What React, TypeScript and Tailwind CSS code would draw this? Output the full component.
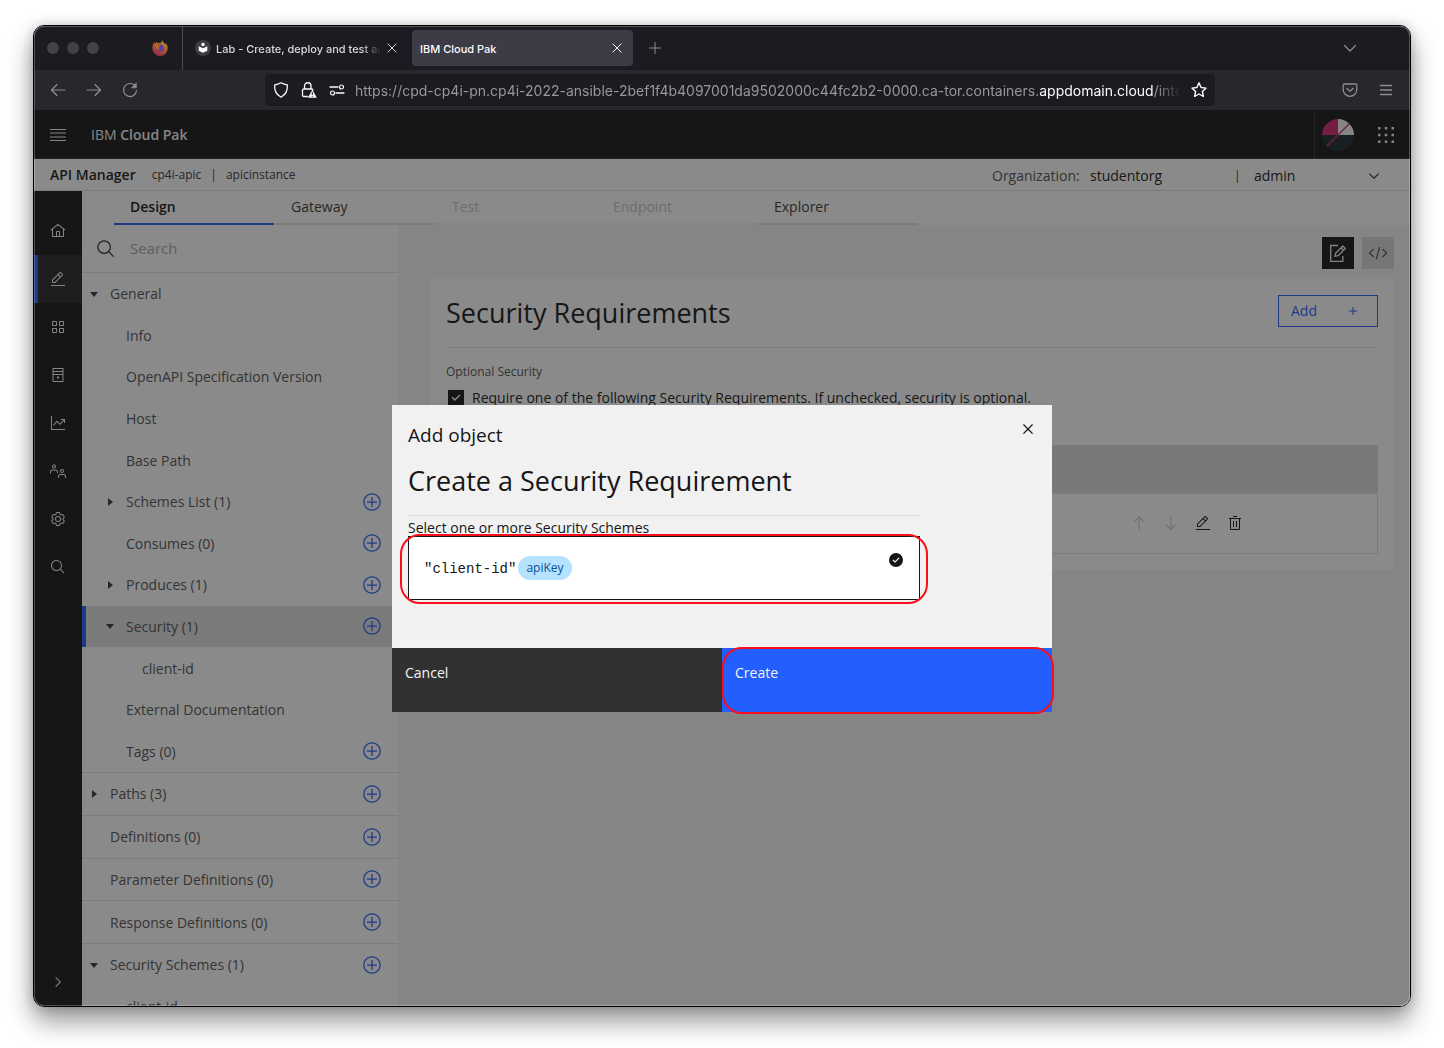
import React from 'react';

const BODY = "font-['Open_Sans',sans-serif]";

function Carbon({ d, className = 'size-4' }: { d: string; className?: string }) {
  return (
    <svg viewBox="0 0 32 32" fill="currentColor" className={`${className} shrink-0`} aria-hidden="true">
      <path d={d} />
    </svg>
  );
}

const ICON = {
  home: 'M16.6123,2.2138a1.01,1.01,0,0,0-1.2427,0L1,13.4194l1.2427,1.5717L4,13.6208V26a2.0041,2.0041,0,0,0,2,2H26a2.0037,2.0037,0,0,0,2-2V13.63L29.7573,15,31,13.4282ZM18,26H14V18h4Zm2,0V18a2.0023,2.0023,0,0,0-2-2H14a2.002,2.002,0,0,0-2,2v8H6V12.0615l10-7.79,10,7.8005V26Z',
  edit: 'M2,28H30V30H2zM25.4,9c0.8-0.8,0.8-2,0-2.8l-3.6-3.6c-0.8-0.8-2-0.8-2.8,0l-15,15V24h6.4L25.4,9zM20.4,4L24,7.6l-3,3L17.4,7L20.4,4zM6,22v-3.6l10-10l3.6,3.6l-10,10H6z',
  grid: 'M12,4H6A2,2,0,0,0,4,6v6a2,2,0,0,0,2,2h6a2,2,0,0,0,2-2V6A2,2,0,0,0,12,4Zm0,8H6V6h6ZM26,4H20a2,2,0,0,0-2,2v6a2,2,0,0,0,2,2h6a2,2,0,0,0,2-2V6A2,2,0,0,0,26,4Zm0,8H20V6h6ZM12,18H6a2,2,0,0,0-2,2v6a2,2,0,0,0,2,2h6a2,2,0,0,0,2-2V20A2,2,0,0,0,12,18Zm0,8H6V20h6ZM26,18H20a2,2,0,0,0-2,2v6a2,2,0,0,0,2,2h6a2,2,0,0,0,2-2V20A2,2,0,0,0,26,18Zm0,8H20V20h6Z',
  server: 'M5,2H27V30H5ZM7,4V8H25V4ZM7,10V14H25V10ZM7,16V28H25V16ZM14,19H18V23H14Z',
  chart: 'M2,2H4V28H30V30H2ZM22,8H30V16H28V11.4L20,20L14,14L7.4,21.4L6,20L14,11L20,17L26.6,10H22Z',
  users: 'M8,3a4,4,0,1,1,0,8a4,4,0,0,1,0-8zM8,5a2,2,0,1,0,0,4a2,2,0,0,0,0-4zM0,21V18a5,5,0,0,1,5-5H11a5,5,0,0,1,5,5V20H14V18a3,3,0,0,0-3-3H5a3,3,0,0,0-3,3V21zM24,12a4,4,0,1,1,0,8a4,4,0,0,1,0-8zM24,14a2,2,0,1,0,0,4a2,2,0,0,0,0-4zM16,30V27a5,5,0,0,1,5-5H27a5,5,0,0,1,5,5V30H30V27a3,3,0,0,0-3-3H21a3,3,0,0,0-3,3V30z',
  gear: 'M27,16.76c0-.25,0-.5,0-.76s0-.51,0-.77l1.92-1.68A2,2,0,0,0,29.3,11L26.94,7a2,2,0,0,0-1.73-1,2,2,0,0,0-.64.1l-2.43.82a11.35,11.35,0,0,0-1.31-.75l-.51-2.52a2,2,0,0,0-2-1.61H13.64a2,2,0,0,0-2,1.61l-.51,2.52a11.48,11.48,0,0,0-1.32.75L7.43,6.06A2,2,0,0,0,6.79,6,2,2,0,0,0,5.06,7L2.7,11a2,2,0,0,0,.41,2.51L5,15.24c0,.25,0,.5,0,.76s0,.51,0,.77L3.11,18.45A2,2,0,0,0,2.7,21L5.06,25a2,2,0,0,0,1.73,1,2,2,0,0,0,.64-.1l2.43-.82a11.35,11.35,0,0,0,1.31.75l.51,2.52a2,2,0,0,0,2,1.61h4.72a2,2,0,0,0,2-1.61l.51-2.52a11.48,11.48,0,0,0,1.32-.75l2.42.82a2,2,0,0,0,.64.1,2,2,0,0,0,1.73-1L29.3,21a2,2,0,0,0-.41-2.51ZM25.21,24l-3.43-1.16a8.86,8.86,0,0,1-2.71,1.57L18.36,28H13.64l-.71-3.55a9.36,9.36,0,0,1-2.7-1.57L6.79,24,4.43,20l2.72-2.4a8.9,8.9,0,0,1,0-3.13L4.43,12,6.79,8l3.43,1.16a8.86,8.86,0,0,1,2.71-1.57L13.64,4h4.72l.71,3.55a9.36,9.36,0,0,1,2.7,1.57L25.21,8,27.57,12l-2.72,2.4a8.9,8.9,0,0,1,0,3.13L27.57,20ZM16,22a6,6,0,1,1,6-6A5.94,5.94,0,0,1,16,22Zm0-10a3.91,3.91,0,0,0-4,4,3.91,3.91,0,0,0,4,4,3.91,3.91,0,0,0,4-4A3.91,3.91,0,0,0,16,12Z',
  search: 'M29,27.5859l-7.5521-7.5521a11.0177,11.0177,0,1,0-1.4141,1.4141L27.5859,29ZM4,13a9,9,0,1,1,9,9A9.01,9.01,0,0,1,4,13Z',
  addAlt: 'M16,4c6.6,0,12,5.4,12,12s-5.4,12-12,12S4,22.6,4,16S9.4,4,16,4M16,2C8.3,2,2,8.3,2,16s6.3,14,14,14s14-6.3,14-14S23.7,2,16,2zM24,15L17,15 17,8 15,8 15,15 8,15 8,17 15,17 15,24 17,24 17,17 24,17z',
  add: 'M17,15V8H15V15H8V17H15V24H17V17H24V15Z',
  code: 'M31,16L24,23 22.59,21.59 28.17,16 22.59,10.41 24,9zM1,16L8,9 9.41,10.41 3.83,16 9.41,21.59 8,23zM12.42,25.484L17.64,6 19.572,6.517 14.352,26.002z',
  close: 'M24,9.4L22.6,8 16,14.6 9.4,8 8,9.4 14.6,16 8,22.6 9.4,24 16,17.4 22.6,24 24,22.6 17.4,16z',
  trash: 'M12,12H14V24H12zM18,12H20V24H18zM4,6V8H6V28a2,2,0,0,0,2,2H24a2,2,0,0,0,2-2V8h2V6ZM8,28V8H24V28ZM12,2H20V4H12z',
  up: 'M16,2L26,12 24.6,13.4 17,5.8V30H15V5.8L7.4,13.4 6,12z',
  down: 'M16,30L6,20 7.4,18.6 15,26.2V2H17V26.2L24.6,18.6 26,20z',
  chevronDown: 'M16,22L6,12 7.4,10.6 16,19.2 24.6,10.6 26,12z',
  chevronRight: 'M22,16L12,26 10.6,24.6 19.2,16 10.6,7.4 12,6z',
  caretDown: 'M24,12L16,22 8,12z',
  caretRight: 'M12,8L22,16 12,24z',
  checkFilled: 'M16,2a14,14,0,1,0,14,14A14,14,0,0,0,16,2zM14,21.5908l-5-5L10.5906,15,14,18.4092,21.41,11l1.5957,1.5859z',
  check: 'M13,24L4,15 6.6,12.4 13,18.8 25.4,6.4 28,9z',
  menu: 'M0,4H32V6H0zM0,11H32V13H0zM0,19H32V21H0zM0,26H32V28H0z',
  dots: 'M0,0H5V5H0zM13.500,0H18.500V5H13.500zM27,0H32V5H27zM0,13.500H5V18.500H0zM13.500,13.500H18.500V18.500H13.500zM27,13.500H32V18.500H27zM0,27H5V32H0zM13.500,27H18.500V32H13.500zM27,27H32V32H27z',
};

function Stroke({ children, className = 'size-4' }: { children: React.ReactNode; className?: string }) {
  return (
    <svg viewBox="0 0 16 16" fill="none" stroke="currentColor" strokeLinecap="round" strokeLinejoin="round" className={`${className} shrink-0`} aria-hidden="true">
      {children}
    </svg>
  );
}

function FirefoxLogo() {
  return (
    <svg viewBox="0 0 16 16" className="size-4" aria-label="Firefox">
      <defs>
        <linearGradient id="flame" x1="0.8" y1="0" x2="0.3" y2="1">
          <stop offset="0" stopColor="#b39a35" />
          <stop offset="0.45" stopColor="#b05d2d" />
          <stop offset="1" stopColor="#97264c" />
        </linearGradient>
      </defs>
      <path fill="url(#flame)" d="M10.2.2c-.8.8-.9 2-.6 2.6C8.400 2.600 7 2.800 6 3.300 5.200 3 4.700 2.400 4.600 1.800 4 2.300 3.800 3 3.800 3.600 3 3.300 2.400 2.500 2.300 1.900 1.200 3.200.3 5.600.3 8.200a7.700 7.700 0 0 0 15.400 0c0-2.100-.7-3.700-1.700-4.700.1.5.1.900 0 1.300C13.200 3 10.700 2.500 10.200.2z" />
      <circle cx="8.300" cy="8" r="3.500" fill="#5a3f9c" />
      <path fill="#b5652c" d="M3.500 5.400c1.200-.8 2.300-.6 3.200 0l2 .3c0 .8-1.300 1.100-1.800 1.500.1 1 .9 1.700 2 1.600-1 1.200-3.500 1.100-4.500-.6-.5-.900-.9-1.900-.9-2.800z" />
    </svg>
  );
}

function BrowserChrome() {
  return (
    <div className="shrink-0 font-['Inter',sans-serif]">
      <div className="flex h-11 items-center bg-[#1c1b22]">
        <div className="flex h-full w-[149px] shrink-0 items-center border-r border-[#4a4950] pl-[13px]">
          <div className="flex flex-1 gap-2">
            <span className="size-3 rounded-full bg-[#424147]" />
            <span className="size-3 rounded-full bg-[#424147]" />
            <span className="size-3 rounded-full bg-[#424147]" />
          </div>
          <div className="pr-[14px]"><FirefoxLogo /></div>
        </div>
        <div className="flex h-9 w-[229px] shrink-0 items-center gap-[5px] pl-3 pr-[14px] text-[#d8d8dc]">
          <svg viewBox="0 0 16 16" className="size-4 shrink-0" aria-hidden="true">
            <circle cx="8" cy="8" r="8" fill="#3d3d3f" />
            <circle cx="8" cy="4.500" r="1.700" fill="#fff" />
            <path fill="#fff" d="M3.700 6.200 8 8.200l4.300-2v4.600L8 12.800l-4.300-2z" />
          </svg>
          <span className="flex-1 overflow-hidden whitespace-nowrap pt-0.5 text-[11px] font-medium [mask-image:linear-gradient(to_right,black_88%,transparent)]">Lab - Create, deploy and test an</span>
          <button type="button" aria-label="Close tab"><Stroke className="size-3"><path strokeWidth="1.300" d="M2.500 2.500l11 11M13.500 2.500l-11 11" /></Stroke></button>
        </div>
        <div className="flex h-9 w-[221px] shrink-0 items-center justify-between rounded bg-[#3d3b46] pl-2 pr-[10px] text-[#fbfbfe]">
          <span className="pt-0.5 text-[11px] font-medium">IBM Cloud Pak</span>
          <button type="button" aria-label="Close tab"><Stroke className="size-3"><path strokeWidth="1.300" d="M2.500 2.500l11 11M13.500 2.500l-11 11" /></Stroke></button>
        </div>
        <button type="button" aria-label="New tab" className="ml-[14px] text-[#8d8d92]"><Stroke><path d="M8 2.500v11M2.500 8h11" /></Stroke></button>
        <button type="button" aria-label="List all tabs" className="ml-auto mr-[52px] text-[#8d8d92]"><Stroke><path strokeWidth="1.200" d="M2.500 5.500 8 11l5.500-5.500" /></Stroke></button>
      </div>
      <div className="flex h-[41px] items-center border-b border-[#141418] bg-[#27282e] text-[#8d8d92]">
        <div className="flex w-[231px] shrink-0 gap-5 pl-4">
          <button type="button" aria-label="Back"><Stroke><path strokeWidth="1.200" d="M15 8H1.500M7 2.500 1.500 8 7 13.500" /></Stroke></button>
          <button type="button" aria-label="Forward"><Stroke><path strokeWidth="1.200" d="M1 8h13.500M9 2.500 14.500 8 9 13.500" /></Stroke></button>
          <button type="button" aria-label="Reload"><Stroke><path strokeWidth="1.200" d="M14.500 8.500A6.500 6.500 0 1 1 12.800 3.600" /><path fill="currentColor" strokeWidth="0.800" d="M14.300 1.300v4.500H9.800z" /></Stroke></button>
        </div>
        <div className="flex h-8 min-w-0 flex-1 items-center gap-3 rounded bg-[#1c1b22] px-2 text-[#fbfbfe]">
          <Stroke><path strokeWidth="1.300" d="M8 .8c2 1.100 4 1.800 6.300 2 .5 6-1.800 10-6.300 12.400C3.500 12.800 1.200 8.800 1.700 2.800 4 2.600 6 1.900 8 .8z" /></Stroke>
          <Stroke>
            <path strokeWidth="1.300" d="M3.500 7V4a3 3 0 0 1 6.500 0v3M6.500 14.500H2.700a1.200 1.200 0 0 1-1.200-1.200V8.200A1.200 1.200 0 0 1 2.700 7h8a1.200 1.200 0 0 1 1.200 1" />
            <path fill="currentColor" stroke="none" d="M11.300 7.800 15.800 15.700H6.900z" />
            <path stroke="#1c1b22" strokeWidth="1.100" d="M11.300 10.600v1.900M11.300 14.200v.1" />
          </Stroke>
          <Stroke><path strokeWidth="1.300" d="M1 5h8M7 11h8" /><circle cx="12.500" cy="5" r="2" strokeWidth="1.200" /><circle cx="3.500" cy="11" r="2" strokeWidth="1.200" /></Stroke>
          <p className="-mx-0.5 min-w-0 flex-1 overflow-hidden whitespace-nowrap pt-px text-sm text-[#97979c] [mask-image:linear-gradient(to_right,black_97%,transparent)]">
            https://cpd-cp4i-pn.cp4i-2022-ansible-2bef1f4b4097001da9502000c44fc2b2-0000.ca-tor.containers.<span className="text-[#fbfbfe]">appdomain.cloud</span>/integra
          </p>
          <button type="button" aria-label="Bookmark this page"><Stroke><path strokeWidth="1.400" d="M8 .9l2.100 4.600 5 .6-3.700 3.400 1 5L8 12l-4.400 2.500 1-5L.9 6.100l5-.6z" /></Stroke></button>
        </div>
        <div className="flex w-[195px] shrink-0 justify-end gap-5 pr-4">
          <button type="button" aria-label="Save to Pocket"><Stroke><path strokeWidth="1.300" d="M2.500 2h11c.8 0 1.300.5 1.300 1.300V7.500a6.800 6.800 0 0 1-13.600 0V3.300C1.200 2.500 1.700 2 2.500 2zM4.800 6.200 8 9.200l3.200-3" /></Stroke></button>
          <button type="button" aria-label="Application menu"><Stroke><path strokeWidth="1.300" d="M2.500 3.500h11M2.500 8h11M2.500 12.500h11" /></Stroke></button>
        </div>
      </div>
    </div>
  );
}

function ProductHeader() {
  return (
    <header className="flex h-12 shrink-0 items-center border-b border-[#393939] bg-[#161616] text-[#f4f4f4]">
      <button type="button" aria-label="Open menu" className="ml-4"><Carbon d={ICON.menu} /></button>
      <span className="ml-[25px] text-sm">IBM <span className="font-semibold">Cloud Pak</span></span>
      <div className="ml-auto flex h-full items-center gap-6 border-l border-[#393939] pl-[7px] pr-4">
        <svg viewBox="0 0 32 32" className="size-8" aria-label="User profile">
          <path fill="#d12771" d="M16 16V0A16 16 0 0 0 0 16z" />
          <path fill="#f4f4f4" d="M16 16V0a16 16 0 0 1 16 16z" />
          <path fill="#1c2b33" d="M0 16a16 16 0 0 0 32 0z" />
          <path stroke="#d12771" strokeWidth="1.300" d="M5 27 27.500 4.500" />
        </svg>
        <button type="button" aria-label="App switcher"><Carbon d={ICON.dots} /></button>
      </div>
    </header>
  );
}

function ContextBar() {
  return (
    <div className="flex h-8 shrink-0 items-center border-b border-[#e0e0e0] bg-white pl-4 text-[#161616]">
      <strong className="text-sm font-semibold">API Manager</strong>
      <span className="ml-4 text-xs text-[#393939]">cp4i-apic</span>
      <span className="ml-[9px] text-xs text-[#393939]">|</span>
      <span className="ml-[9px] text-xs text-[#393939]">apicinstance</span>
      <div className="ml-auto flex items-center pt-0.5 text-sm">
        <span className="w-[98px] text-[#525252]">Organization:</span>
        <span className="w-36">studentorg</span>
        <span className="w-5 text-xs text-[#393939]">|</span>
        <button type="button" className="flex w-[156px] items-center justify-between pr-7">
          admin <Carbon d={ICON.chevronDown} />
        </button>
      </div>
    </div>
  );
}

const NAV = [
  { label: 'Home', d: ICON.home },
  { label: 'Develop', d: ICON.edit, active: true },
  { label: 'Manage', d: ICON.grid },
  { label: 'Resources', d: ICON.server },
  { label: 'Analytics', d: ICON.chart },
  { label: 'Members', d: ICON.users },
  { label: 'Settings', d: ICON.gear },
  { label: 'Search', d: ICON.search },
];

function SideNav() {
  return (
    <nav className="flex w-12 shrink-0 flex-col bg-[#161616] pt-4 text-[#f4f4f4]">
      {NAV.map((n) => (
        <button key={n.label} type="button" aria-label={n.label} className={n.active ? 'flex h-12 items-center justify-center border-l-4 border-[#225ffe] bg-[#262626] pr-1' : 'flex h-12 items-center justify-center'}>
          <Carbon d={n.d} />
        </button>
      ))}
      <button type="button" aria-label="Expand" className="mt-auto flex h-12 items-center justify-center"><Carbon d={ICON.chevronRight} /></button>
    </nav>
  );
}

const TABS = [
  { label: 'Design', look: 'border-[#225ffe] font-semibold text-[#161616]' },
  { label: 'Gateway', look: 'border-[#e0e0e0] text-[#393939]' },
  { label: 'Test', look: 'border-[#f4f4f4] text-[#c6c6c6]', disabled: true },
  { label: 'Endpoint', look: 'border-[#f4f4f4] text-[#c6c6c6]', disabled: true },
  { label: 'Explorer', look: 'border-[#e0e0e0] text-[#393939]' },
];

function Tabs() {
  return (
    <div role="tablist" className="flex h-[34px] shrink-0 gap-px bg-white pl-8">
      {TABS.map((t) => (
        <button key={t.label} role="tab" type="button" disabled={t.disabled} className={`w-40 border-b-2 px-4 text-left text-sm ${t.look}`}>{t.label}</button>
      ))}
    </div>
  );
}

type Row = { label: string; level: 0 | 1 | 2; caret?: 'down' | 'right'; add?: boolean; active?: boolean };

const GENERAL: Row[] = [
  { label: 'General', level: 0, caret: 'down' },
  { label: 'Info', level: 1 },
  { label: 'OpenAPI Specification Version', level: 1 },
  { label: 'Host', level: 1 },
  { label: 'Base Path', level: 1 },
  { label: 'Schemes List (1)', level: 1, caret: 'right', add: true },
  { label: 'Consumes (0)', level: 1, add: true },
  { label: 'Produces (1)', level: 1, caret: 'right', add: true },
  { label: 'Security (1)', level: 1, caret: 'down', add: true, active: true },
  { label: 'client-id', level: 2 },
  { label: 'External Documentation', level: 1 },
  { label: 'Tags (0)', level: 1, add: true },
];

const SECTIONS: Row[] = [
  { label: 'Paths (3)', level: 0, caret: 'right', add: true },
  { label: 'Definitions (0)', level: 0, add: true },
  { label: 'Parameter Definitions (0)', level: 0, add: true },
  { label: 'Response Definitions (0)', level: 0, add: true },
];

const SCHEMES: Row[] = [
  { label: 'Security Schemes (1)', level: 0, caret: 'down', add: true },
  { label: 'client-id', level: 1 },
];

const INDENT = ['pl-1', 'pl-5', 'pl-9'];

function TreeRow({ row }: { row: Row }) {
  return (
    <div className={row.active ? 'flex h-full items-center border-l-4 border-[#225ffe] bg-[#e0e0e0] pr-4' : 'flex h-full items-center pl-1 pr-4'}>
      <button type="button" className={`flex flex-1 items-center gap-2 text-left ${INDENT[row.level]}`}>
        <span className="-ml-1 w-4 text-[#393939]">
          {row.caret && <Carbon d={row.caret === 'down' ? ICON.caretDown : ICON.caretRight} />}
        </span>
        <span className="pt-px">{row.label}</span>
      </button>
      {row.add && <button type="button" aria-label={`Add ${row.label}`} className="text-[#225ffe]"><Carbon d={ICON.addAlt} className="size-5" /></button>}
    </div>
  );
}

function Tree() {
  return (
    <aside className="flex w-[316px] shrink-0 flex-col overflow-hidden bg-white text-sm text-[#525252]">
      <label className="flex h-12 shrink-0 items-center gap-[14px] border-b border-[#e0e0e0] pl-[14px] pt-px text-[#393939]">
        <Carbon d={ICON.search} className="size-5" />
        <input type="search" placeholder="Search" aria-label="Search" className="w-full bg-transparent text-[15px] outline-none placeholder:text-[#a8a8a8]" />
      </label>
      <div className="grid h-[499px] shrink-0 auto-rows-fr">
        {GENERAL.map((r) => <TreeRow key={r.label} row={r} />)}
      </div>
      <div className="grid h-[171px] shrink-0 auto-rows-fr">
        {SECTIONS.map((r) => <div key={r.label} className="border-t border-[#e0e0e0]"><TreeRow row={r} /></div>)}
      </div>
      <div className="grid h-[84px] shrink-0 auto-rows-fr border-t border-[#e0e0e0]">
        {SCHEMES.map((r) => <TreeRow key={r.label} row={r} />)}
      </div>
    </aside>
  );
}

function Editor() {
  return (
    <main className="min-w-0 flex-1 overflow-hidden bg-[#f4f4f4] pl-8 pr-4 pt-3 text-[#161616]">
      <div className="flex justify-end gap-2">
        <button type="button" aria-label="Form view" className="flex size-8 items-center justify-center bg-[#161616] text-[#f4f4f4]">
          <svg viewBox="0 0 20 20" fill="none" stroke="currentColor" strokeWidth="1.300" className="size-5" aria-hidden="true">
            <path d="M10 2.500H2.700v15.800h12.100V13" />
            <path d="M7 13.200l.6-3L14.800 3l2.500 2.500-7.200 7.200zM13 4.800l2.500 2.500" />
          </svg>
        </button>
        <button type="button" aria-label="Source view" className="flex size-8 items-center justify-center bg-[#d6d6d6] text-[#525252]"><Carbon d={ICON.code} className="size-5" /></button>
      </div>
      <section className="mt-[10px] bg-white p-4">
        <div className="flex items-start justify-between border-b border-[#e0e0e0] pb-4">
          <h1 className="text-[27px] leading-9">Security Requirements</h1>
          <button type="button" className="flex h-8 w-[100px] items-center justify-between border border-[#225ffe] pl-3 pr-4 text-sm text-[#225ffe]">Add <Carbon d={ICON.add} /></button>
        </div>
        <p className="mt-4 text-xs text-[#525252]">Optional Security</p>
        <label className="mt-2 flex items-center gap-2 text-sm">
          <span className="grid size-5 place-items-center">
            <input type="checkbox" defaultChecked className="col-start-1 row-start-1 size-4 appearance-none bg-[#161616]" />
            <Carbon d={ICON.check} className="pointer-events-none col-start-1 row-start-1 size-3 text-white" />
          </span>
          <span className="-ml-0.5">Require one of the following Security Requirements. If unchecked, security is optional.</span>
        </label>
        <table className="mt-[37px] w-full border-collapse text-sm" aria-label="Security Requirements">
          <thead>
            <tr className="h-12 bg-[#dcdcdc]"><th aria-label="Scheme" /><th aria-label="Actions" className="w-[263px]" /></tr>
          </thead>
          <tbody>
            <tr className="h-[60px] border border-[#e0e0e0]">
              <td />
              <td>
                <div className="flex gap-4 pl-4">
                  <button type="button" disabled aria-label="Move up" className="text-[#c6c6c6]"><Carbon d={ICON.up} /></button>
                  <button type="button" disabled aria-label="Move down" className="text-[#c6c6c6]"><Carbon d={ICON.down} /></button>
                  <button type="button" aria-label="Edit"><Carbon d={ICON.edit} /></button>
                  <button type="button" aria-label="Delete"><Carbon d={ICON.trash} /></button>
                </div>
              </td>
            </tr>
          </tbody>
        </table>
      </section>
    </main>
  );
}

function Dialog() {
  return (
    <div className="absolute inset-0 flex items-center justify-center bg-[#161616]/50">
      <div role="dialog" aria-modal="true" aria-labelledby="dialog-title" className="flex h-[307px] w-[660px] flex-col bg-[#f1f1f1] text-[#161616]">
        <div className="flex-1 px-4 pt-[14px]">
          <div className="flex items-start justify-between">
            <h2 id="dialog-title" className="text-[19px] leading-8">Add object</h2>
            <button type="button" aria-label="Close" className="mr-[-2px]"><Carbon d={ICON.close} className="size-5" /></button>
          </div>
          <div className="w-[512px]">
            <h3 className="mt-3 border-b border-[#dcdcdc] pb-4 text-[27px] leading-9">Create a Security Requirement</h3>
            <p className="pt-[3px] text-sm leading-[18px]">Select one or more Security Schemes</p>
            <div className="relative -mt-px">
              <button type="button" role="checkbox" aria-checked="true" className="flex h-16 w-full items-center border border-[#161616] bg-white px-[15px]">
                <span className="pt-0.5 font-['Liberation_Mono',monospace] text-sm">"client-id"</span>
                <span className="ml-0.5 flex h-6 items-center rounded-full bg-[#b5e3ff] px-2 text-xs text-[#0b4f94]">apiKey</span>
                <Carbon d={ICON.checkFilled} className="mb-4 ml-auto size-4" />
              </button>
              <div className="pointer-events-none absolute -inset-x-2 -bottom-1 -top-0.5 rounded-[20px] border-2 border-[#fb0d1b]" />
            </div>
          </div>
        </div>
        <div className="grid h-16 shrink-0 grid-cols-2 text-sm text-[#f4f4f4]">
          <button type="button" className="flex items-start bg-[#313131] px-[13px] pt-[15px]">Cancel</button>
          <div className="relative flex">
            <button type="button" className="flex flex-1 items-start bg-[#225ffe] px-[13px] pt-[15px]">Create</button>
            <div className="pointer-events-none absolute -bottom-0.5 -right-0.5 -top-px left-0 rounded-[20px] border-2 border-[#fb0d1b]" />
          </div>
        </div>
      </div>
    </div>
  );
}

export default function App() {
  return (
    <div className={`${BODY} flex h-screen flex-col bg-white px-[33px] pb-[41px] pt-[25px]`}>
      <div className="relative flex min-h-0 flex-1 flex-col overflow-hidden rounded-[11px] border border-black shadow-[0_14px_26px_rgba(0,0,0,0.42),0_0_12px_rgba(0,0,0,0.18)]">
        <BrowserChrome />
        <div className="relative flex min-h-0 flex-1 flex-col">
          <ProductHeader />
          <ContextBar />
          <div className="flex min-h-0 flex-1">
            <SideNav />
            <div className="flex min-w-0 flex-1 flex-col">
              <Tabs />
              <div className="flex min-h-0 flex-1">
                <Tree />
                <Editor />
              </div>
            </div>
          </div>
          <Dialog />
        </div>
        <div className="pointer-events-none absolute inset-0 rounded-[10px] border border-white/25" />
      </div>
    </div>
  );
}
